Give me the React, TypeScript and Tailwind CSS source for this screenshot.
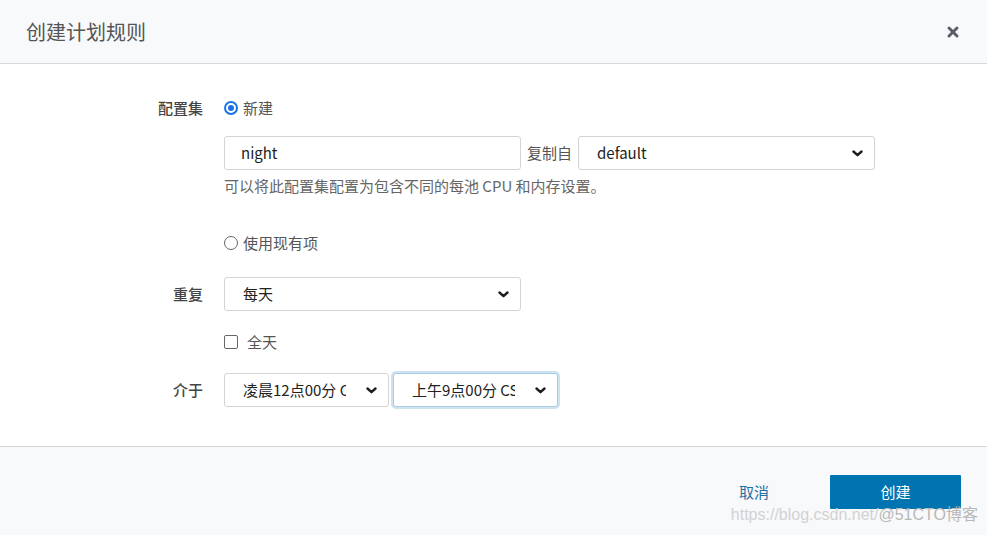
import { X } from 'lucide-react';

const font = { fontFamily: '"Noto Sans CJK SC", "Noto Sans", sans-serif' };

function Chevron() {
  return (
    <svg width="11" height="7" viewBox="0 0 11 7" className="shrink-0">
      <path d="M1.5 1.5 L5.5 5.2 L9.5 1.5" fill="none" stroke="#1e1e1e" strokeWidth="2.4" strokeLinecap="round" strokeLinejoin="round" />
    </svg>
  );
}

function FakeSelect({ value, width, focused }: { value: string; width: string; focused?: boolean }) {
  return (
    <div
      className={`${width} h-[34px] flex items-center justify-between pl-[18px] pr-[11px] bg-white rounded-[3px] border ${
        focused ? 'border-[#a8cce2] shadow-[0_0_0_2px_#cde3f0]' : 'border-[#d4d4d4]'
      }`}
    >
      <span className="text-[15px] text-[#222] whitespace-nowrap overflow-hidden mr-[20px]">{value}</span>
      <Chevron />
    </div>
  );
}

function Row({ label, children, className = '' }: { label?: string; children: React.ReactNode; className?: string }) {
  return (
    <div className={`flex ${className}`}>
      <div className="w-[203px] shrink-0 text-right text-[15px] text-[#444] font-medium leading-[20px]">{label}</div>
      <div className="ml-[21px]">{children}</div>
    </div>
  );
}

export default function App() {
  return (
    <div className="w-[987px] h-[535px] bg-white overflow-hidden relative flex flex-col" style={font}>
      {/* Header */}
      <header className="h-[64px] shrink-0 bg-[#f8f9fb] border-b border-[#d8d8d8] flex items-center justify-between pl-[26px] pr-[26px]">
        <h1 className="text-[20px] text-[#555] font-normal">创建计划规则</h1>
        <X size={16} strokeWidth={4.5} className="text-[#596068]" />
      </header>

      {/* Body */}
      <div className="h-[383px] shrink-0 border-b border-[#d8d8d8] pt-[34px]">
        <Row label="配置集">
          <label className="flex items-center h-[20px] text-[15px] text-[#555]">
            <span className="w-[14px] h-[14px] rounded-full border-2 border-[#1a73e8] flex items-center justify-center mr-[5px]">
              <span className="w-[6px] h-[6px] rounded-full bg-[#1a73e8]" />
            </span>
            新建
          </label>
        </Row>

        <Row className="mt-[18px]">
          <div className="flex items-center">
            <div className="w-[297px] h-[34px] flex items-center pl-[16px] border border-[#d4d4d4] rounded-[3px] text-[15px] text-[#222]">
              night
            </div>
            <span className="mx-[6px] text-[15px] text-[#555]">复制自</span>
            <FakeSelect value="default" width="w-[297px]" />
          </div>
          <p className="mt-[6px] text-[15px] leading-[20px] text-[#666]">可以将此配置集配置为包含不同的每池 CPU 和内存设置。</p>
        </Row>

        <Row className="mt-[37px]">
          <label className="flex items-center h-[20px] text-[15px] text-[#555]">
            <span className="w-[14px] h-[14px] rounded-full border border-[#666] mr-[5px]" />
            使用现有项
          </label>
        </Row>

        <Row label="重复" className="mt-[24px] items-center">
          <FakeSelect value="每天" width="w-[297px]" />
        </Row>

        <Row className="mt-[21px]">
          <label className="flex items-center h-[20px] text-[15px] text-[#555]">
            <span className="w-[14px] h-[14px] rounded-[2px] border border-[#666] mr-[9px]" />
            全天
          </label>
        </Row>

        <Row label="介于" className="mt-[21px] items-center">
          <div className="flex gap-[4px]">
            <FakeSelect value="凌晨12点00分 CST" width="w-[165px]" />
            <FakeSelect value="上午9点00分 CST" width="w-[165px]" focused />
          </div>
        </Row>
      </div>

      {/* Footer */}
      <footer className="flex-1 bg-[#f8f9fb] flex items-start justify-end pt-[28px] pr-[26px]">
        <button className="h-[34px] text-[15px] text-[#1f6f9f] mr-[61px]">取消</button>
        <button className="w-[131px] h-[34px] bg-[#0074b0] text-white text-[15px] rounded-[1px]">创建</button>
      </footer>

      <div className="absolute right-[9px] bottom-[8px] text-[16px] text-[#d2d2d2] whitespace-nowrap pointer-events-none" style={{ fontFamily: '"Liberation Sans", "Noto Sans CJK SC", sans-serif' }}>
        https://blog.csdn.net/<span className="text-[#b8b8b8]">@51CTO博客</span>
      </div>
    </div>
  );
}
